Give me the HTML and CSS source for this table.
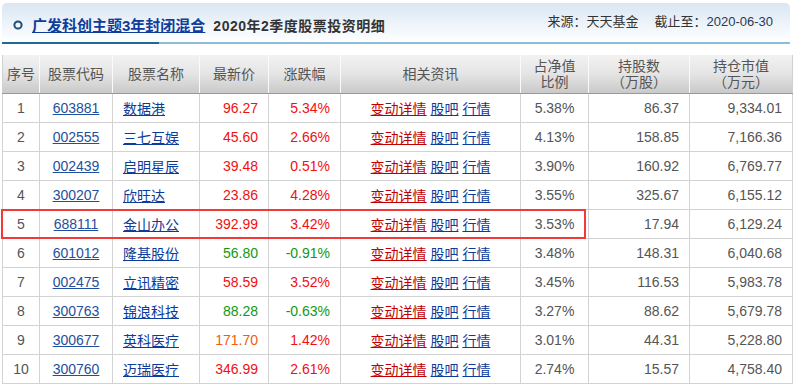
FILE: index.html
```html
<!DOCTYPE html>
<html lang="zh-CN">
<head>
<meta charset="utf-8">
<title>股票投资明细</title>
<link rel="stylesheet" href="styles.css">
</head>
<body>
<div class="page">
  <div class="titlebar">
    <div class="title-left">
      <svg class="ring" width="10" height="10" viewBox="0 0 10 10"><circle cx="5" cy="5" r="3.6" fill="none" stroke="#1d4f7c" stroke-width="2"/></svg>
      <a class="fund-link" href="#">广发科创主题3年封闭混合</a>
      <span class="title-text">2020年2季度股票投资明细</span>
    </div>
    <div class="title-right">来源：天天基金<span class="gap"></span>截止至：<span class="date">2020-06-30</span></div>
  </div>
  <div class="tablewrap">
    <table class="holdings">
      <colgroup>
        <col class="c1"><col class="c2"><col class="c3"><col class="c4"><col class="c5"><col class="c6"><col class="c7"><col class="c8"><col class="c9">
      </colgroup>
      <thead>
        <tr>
          <th>序号</th><th>股票代码</th><th>股票名称</th><th>最新价</th><th>涨跌幅</th><th>相关资讯</th><th>占净值<br>比例</th><th>持股数<br>（万股）</th><th>持仓市值<br>（万元）</th>
        </tr>
      </thead>
      <tbody>
        <tr><td class="ctr">1</td><td class="ctr"><a class="code" href="#">603881</a></td><td class="lft"><a class="name" href="#">数据港</a></td><td class="rgt up">96.27</td><td class="rgt up">5.34%</td><td class="ctr links"><a class="red" href="#">变动详情</a> <a href="#">股吧</a> <a href="#">行情</a></td><td class="ctr">5.38%</td><td class="rgt">86.37</td><td class="rgt">9,334.01</td></tr>
        <tr><td class="ctr">2</td><td class="ctr"><a class="code" href="#">002555</a></td><td class="lft"><a class="name" href="#">三七互娱</a></td><td class="rgt up">45.60</td><td class="rgt up">2.66%</td><td class="ctr links"><a class="red" href="#">变动详情</a> <a href="#">股吧</a> <a href="#">行情</a></td><td class="ctr">4.13%</td><td class="rgt">158.85</td><td class="rgt">7,166.36</td></tr>
        <tr><td class="ctr">3</td><td class="ctr"><a class="code" href="#">002439</a></td><td class="lft"><a class="name" href="#">启明星辰</a></td><td class="rgt up">39.48</td><td class="rgt up">0.51%</td><td class="ctr links"><a class="red" href="#">变动详情</a> <a href="#">股吧</a> <a href="#">行情</a></td><td class="ctr">3.90%</td><td class="rgt">160.92</td><td class="rgt">6,769.77</td></tr>
        <tr><td class="ctr">4</td><td class="ctr"><a class="code" href="#">300207</a></td><td class="lft"><a class="name" href="#">欣旺达</a></td><td class="rgt up">23.86</td><td class="rgt up">4.28%</td><td class="ctr links"><a class="red" href="#">变动详情</a> <a href="#">股吧</a> <a href="#">行情</a></td><td class="ctr">3.55%</td><td class="rgt">325.67</td><td class="rgt">6,155.12</td></tr>
        <tr><td class="ctr">5</td><td class="ctr"><a class="code" href="#">688111</a></td><td class="lft"><a class="name" href="#">金山办公</a></td><td class="rgt up">392.99</td><td class="rgt up">3.42%</td><td class="ctr links"><a class="red" href="#">变动详情</a> <a href="#">股吧</a> <a href="#">行情</a></td><td class="ctr">3.53%</td><td class="rgt">17.94</td><td class="rgt">6,129.24</td></tr>
        <tr><td class="ctr">6</td><td class="ctr"><a class="code" href="#">601012</a></td><td class="lft"><a class="name" href="#">隆基股份</a></td><td class="rgt down">56.80</td><td class="rgt down">-0.91%</td><td class="ctr links"><a class="red" href="#">变动详情</a> <a href="#">股吧</a> <a href="#">行情</a></td><td class="ctr">3.48%</td><td class="rgt">148.31</td><td class="rgt">6,040.68</td></tr>
        <tr><td class="ctr">7</td><td class="ctr"><a class="code" href="#">002475</a></td><td class="lft"><a class="name" href="#">立讯精密</a></td><td class="rgt up">58.59</td><td class="rgt up">3.52%</td><td class="ctr links"><a class="red" href="#">变动详情</a> <a href="#">股吧</a> <a href="#">行情</a></td><td class="ctr">3.45%</td><td class="rgt">116.53</td><td class="rgt">5,983.78</td></tr>
        <tr><td class="ctr">8</td><td class="ctr"><a class="code" href="#">300763</a></td><td class="lft"><a class="name" href="#">锦浪科技</a></td><td class="rgt down">88.28</td><td class="rgt down">-0.63%</td><td class="ctr links"><a class="red" href="#">变动详情</a> <a href="#">股吧</a> <a href="#">行情</a></td><td class="ctr">3.27%</td><td class="rgt">88.62</td><td class="rgt">5,679.78</td></tr>
        <tr><td class="ctr">9</td><td class="ctr"><a class="code" href="#">300677</a></td><td class="lft"><a class="name" href="#">英科医疗</a></td><td class="rgt orange">171.70</td><td class="rgt up">1.42%</td><td class="ctr links"><a class="red" href="#">变动详情</a> <a href="#">股吧</a> <a href="#">行情</a></td><td class="ctr">3.01%</td><td class="rgt">44.31</td><td class="rgt">5,228.80</td></tr>
        <tr><td class="ctr">10</td><td class="ctr"><a class="code" href="#">300760</a></td><td class="lft"><a class="name" href="#">迈瑞医疗</a></td><td class="rgt up">346.99</td><td class="rgt up">2.61%</td><td class="ctr links"><a class="red" href="#">变动详情</a> <a href="#">股吧</a> <a href="#">行情</a></td><td class="ctr">2.74%</td><td class="rgt">15.57</td><td class="rgt">4,758.40</td></tr>
      </tbody>
    </table>
    <div class="highlight"></div>
  </div>
</div>
</body>
</html>
```

FILE: styles.css
```css
* { box-sizing: border-box; }
html, body { margin: 0; padding: 0; background: #fff; }
body {
  font-family: "Liberation Sans", Arial, "Noto Sans CJK SC", sans-serif;
  font-size: 14px;
  color: #555;
}
.page { padding: 3px 2px 0 2px; width: 792px; }

.titlebar {
  height: 41px;
  border-radius: 5px 5px 0 0;
  background: linear-gradient(to bottom, #d9e6f3 0%, #eef4fa 55%, #ffffff 100%);
  border-bottom: 2px solid #8fbcdb;
  position: relative;
  display: flex;
  justify-content: space-between;
  align-items: center;
  padding: 0 17px 0 11px;
}
.titlebar::after {
  content: "";
  position: absolute;
  left: 0;
  bottom: -2px;
  width: 157px;
  height: 2px;
  background: #1d6a99;
}
.title-left { display: flex; align-items: center; padding-top: 4px; }
.ring { display: block; margin-right: 9px; }
.fund-link {
  font-size: 15px;
  font-weight: bold;
  color: #0f3d9a;
  text-decoration: underline;
}
.title-text {
  margin-left: 8px;
  font-size: 14px;
  font-weight: bold;
  color: #333;
  letter-spacing: 0.5px;
}
.title-right {
  font-size: 13px;
  color: #333;
  padding-bottom: 4px;
}
.title-right .gap { display: inline-block; width: 16px; }
.title-right .date { color: #2b3a55; }

.tablewrap { position: relative; margin-top: 11px; }
.holdings {
  border-collapse: collapse;
  table-layout: fixed;
  width: 790px;
}
.c1 { width: 37px; }
.c2 { width: 73px; }
.c3 { width: 87px; }
.c4 { width: 69px; }
.c5 { width: 72px; }
.c6 { width: 180px; }
.c7 { width: 68px; }
.c8 { width: 101px; }
.c9 { width: 103px; }

.holdings th {
  height: 38px;
  font-weight: normal;
  color: #555;
  font-size: 14px;
  line-height: 16px;
  background: linear-gradient(to bottom, #f2f2f2 0%, #e4e4e4 50%, #c9c9c9 100%);
  border-left: 1px solid #fafafa;
  border-right: 1px solid #fafafa;
  border-bottom: 1px solid #9a9a9a;
  padding: 0;
  text-align: center;
  vertical-align: middle;
}
.holdings th:first-child { border-left: 1px solid #d0d0d0; }
.holdings th:last-child { border-right: 1px solid #d0d0d0; }
.holdings td {
  height: 29px;
  border: 1px solid #d3d3d3;
  padding: 0 10px;
  white-space: nowrap;
  color: #555;
  vertical-align: middle;
}
.ctr { text-align: center; }
.lft { text-align: left; }
.rgt { text-align: right; }
.holdings td.lft { padding-left: 10px; }
.holdings td.links { padding: 0; }

a { text-decoration: underline; }
.code { color: #1f4f9e; }
.name { color: #0c3b9a; }
.links a { color: #0c3b9a; }
.links a.red { color: #c00000; }
.holdings td.up { color: #f01010; }
.holdings td.down { color: #119911; }
.holdings td.orange { color: #ee6010; }

.highlight {
  position: absolute;
  left: -1px;
  top: 154px;
  width: 585px;
  height: 30px;
  border: 2px solid #f23a3a;
  pointer-events: none;
}
```
